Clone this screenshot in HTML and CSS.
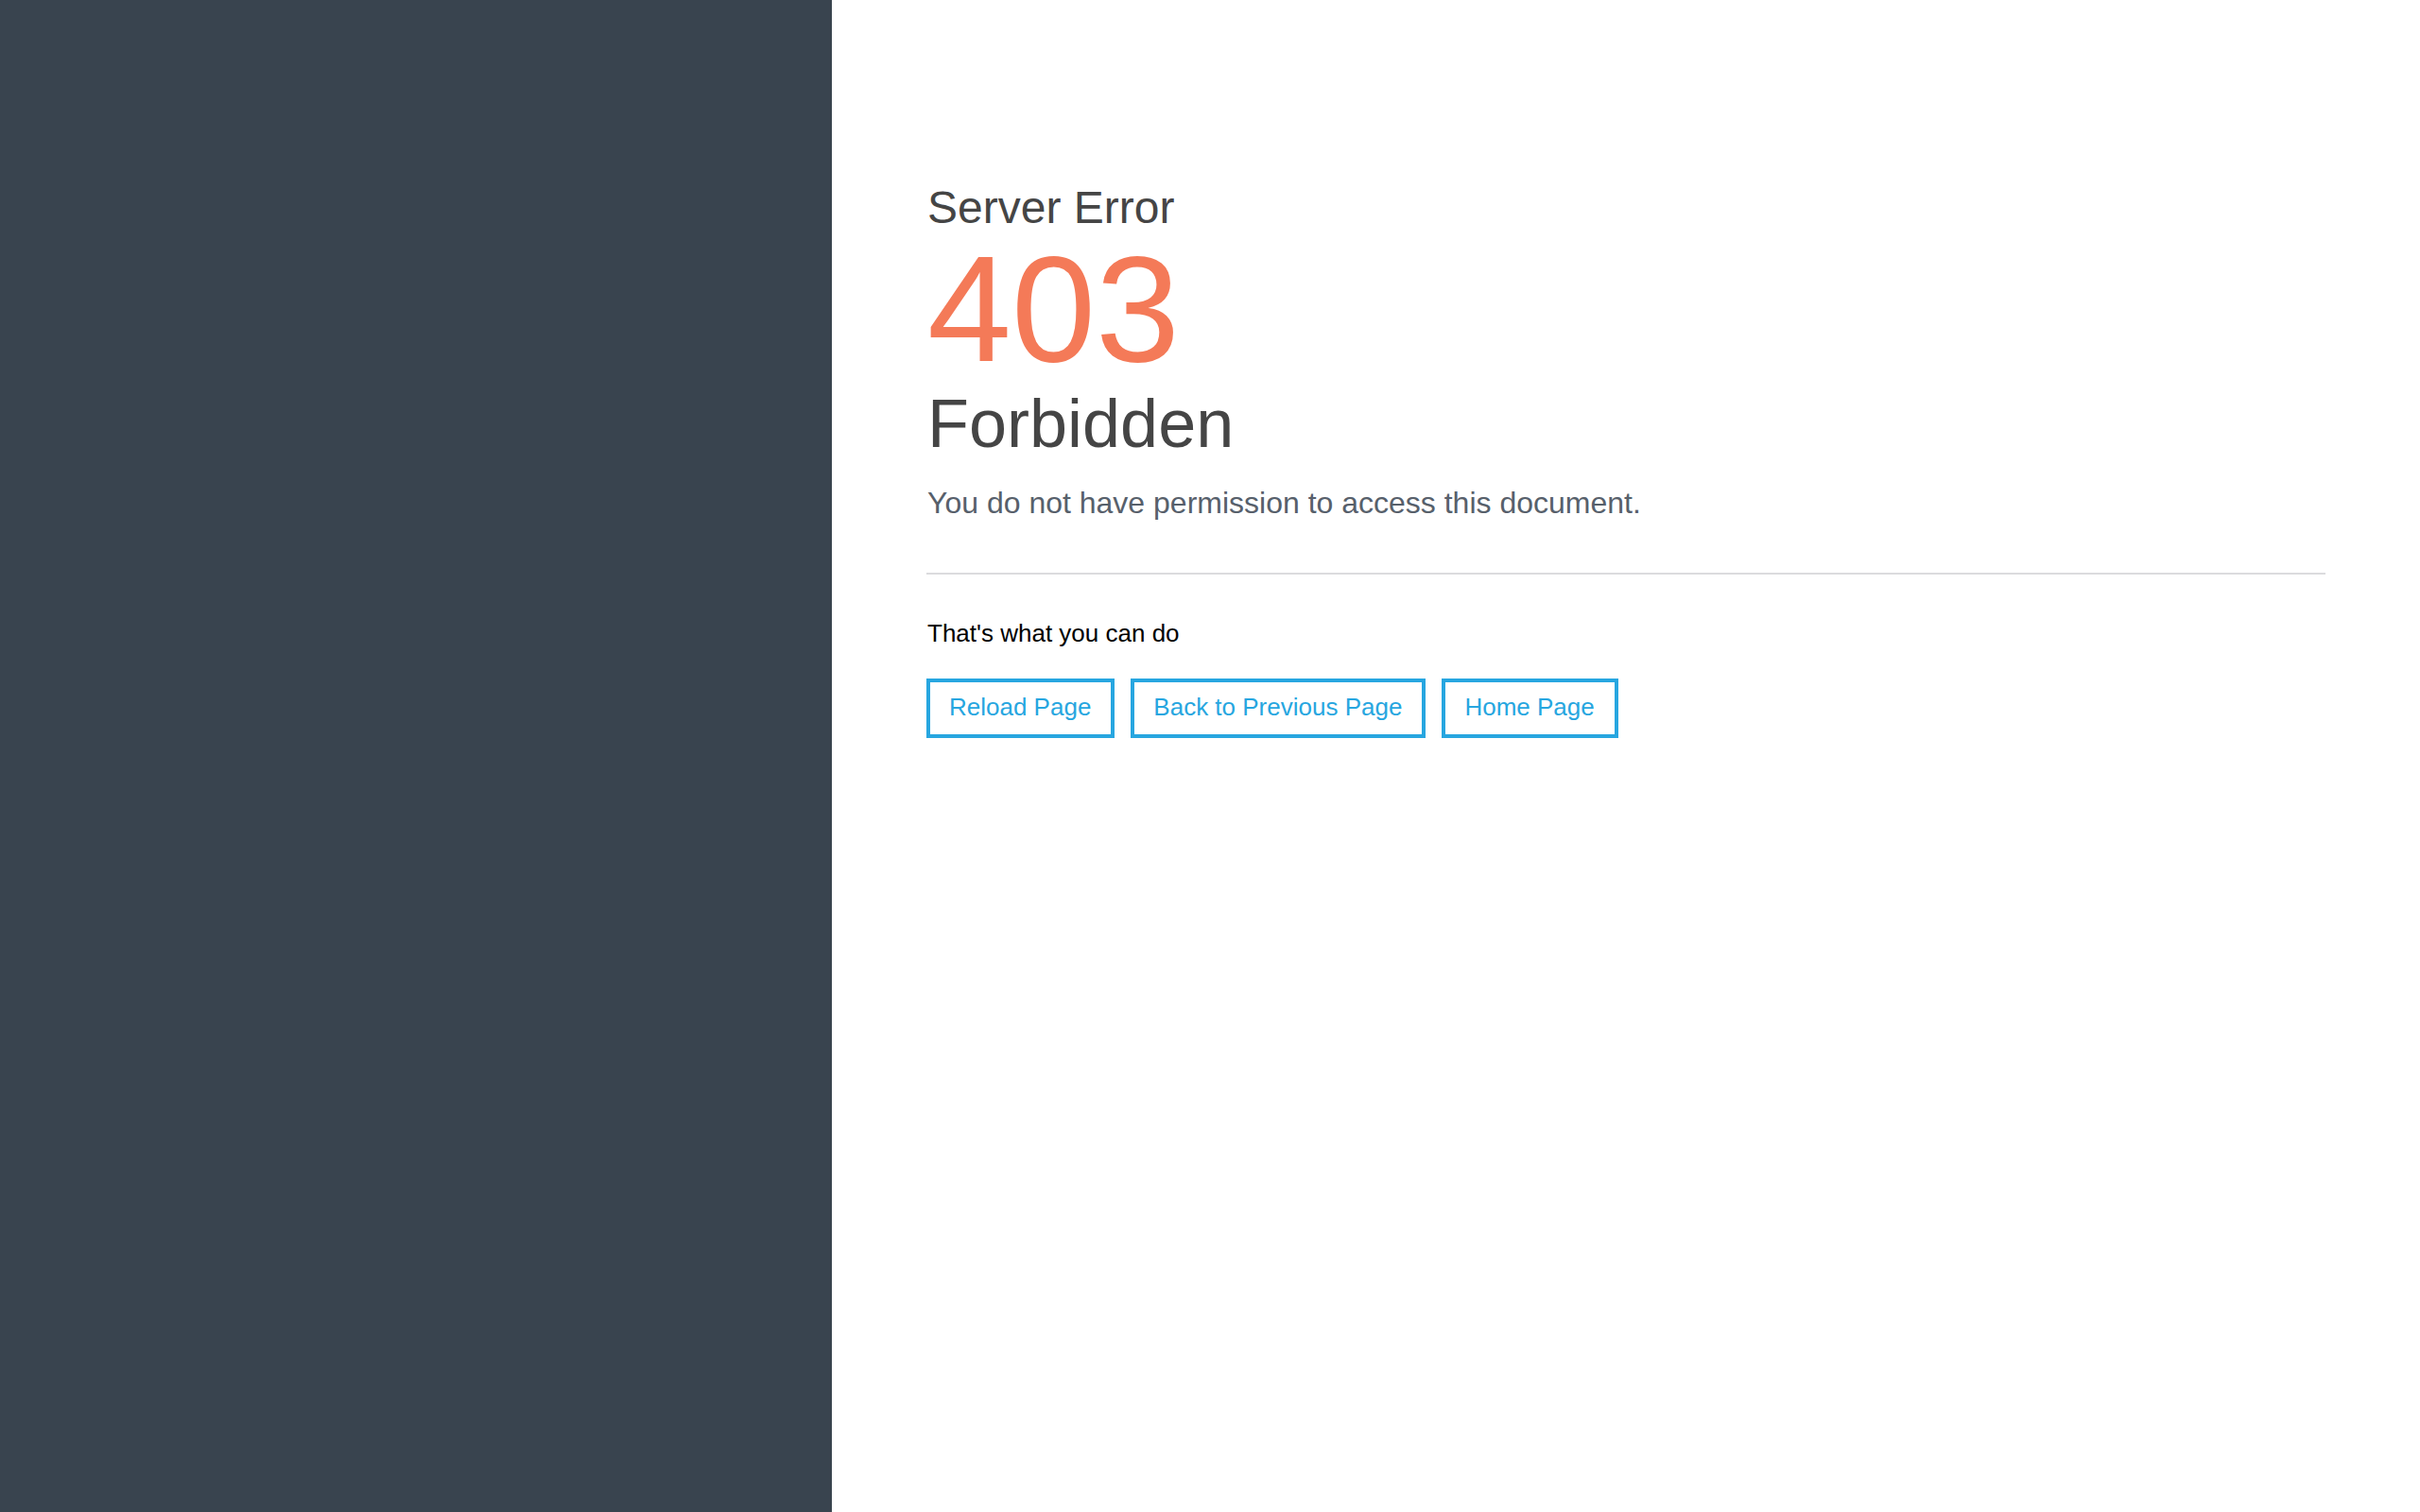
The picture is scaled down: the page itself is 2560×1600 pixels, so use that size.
FILE: index.html
```html
<!DOCTYPE html>
<html lang="en">
<head>
  <meta charset="UTF-8" />
  <meta name="viewport" content="width=device-width, initial-scale=1.0"/>
  <title>403 Forbidden</title>
  <link rel="stylesheet" href="styles.css">
</head>
<body>
  <div class="page">
    <aside class="sidebar"></aside>

    <main class="content">
      <h2 class="error-kind">Server Error</h2>
      <h1 class="error-code">403</h1>
      <h3 class="error-title">Forbidden</h3>
      <p class="error-text">You do not have permission to access this document.</p>

      <hr class="divider">

      <p class="actions-label">That's what you can do</p>
      <div class="actions">
        <a class="action-btn" href="#" onclick="location.reload(); return false;">Reload Page</a>
        <a class="action-btn" href="#" onclick="history.back(); return false;">Back to Previous Page</a>
        <a class="action-btn" href="/">Home Page</a>
      </div>
    </main>
  </div>
</body>
</html>
```

FILE: styles.css
```css
body {
  margin: 0;
  font-family: "Liberation Sans", Arial, Helvetica, sans-serif;
  background: #ffffff;
}

.page {
  display: flex;
  min-height: 100vh;
}

.sidebar {
  width: 880px;
  flex-shrink: 0;
  background: #39444f;
}

.content {
  flex: 1;
  padding: 192px 100px 100px 101px;
}

.error-kind {
  margin: 0;
  font-size: 48px;
  font-weight: normal;
  line-height: 1.15;
  color: #454545;
}

.error-code {
  margin: 0;
  font-size: 160px;
  font-weight: normal;
  line-height: 1;
  color: #f47a58;
}

.error-title {
  margin: 0;
  font-size: 72px;
  font-weight: normal;
  line-height: 1.15;
  color: #454545;
}

.error-text {
  margin: 23px 0 0 0;
  font-size: 32px;
  line-height: 1.2;
  color: #57606b;
}

.divider {
  margin: 55px 0 0 -1px;
  border: none;
  height: 2px;
  background: #dbdbde;
}

.actions-label {
  margin: 47px 0 0 0;
  font-size: 26px;
  line-height: 1.2;
  color: #000000;
}

.actions {
  display: flex;
  gap: 17px;
  margin: 31px 0 0 -1px;
}

.action-btn {
  display: inline-block;
  padding: 11px 21px 13px 20px;
  border: 4px solid #27a6e0;
  font-size: 26px;
  line-height: 1.2;
  color: #27a6e0;
  text-decoration: none;
}

.action-btn:hover {
  background: #27a6e0;
  color: #ffffff;
}
```
